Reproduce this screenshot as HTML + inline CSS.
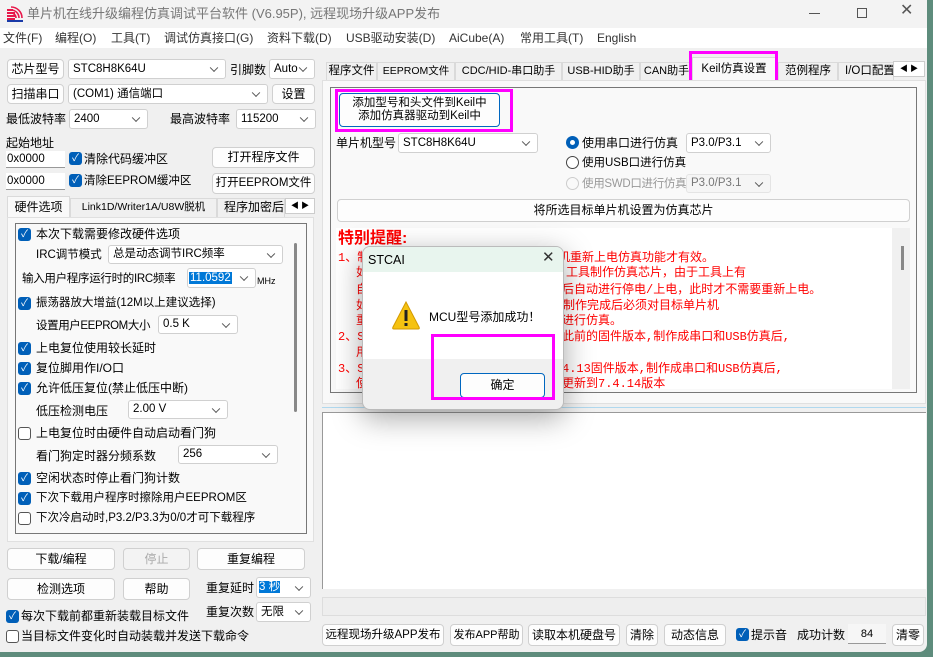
<!DOCTYPE html><html><head><meta charset="utf-8"><style>
*{margin:0;padding:0;box-sizing:border-box}
body{width:933px;height:657px;overflow:hidden;background:#5e8c7c;font-family:"Liberation Sans","Noto Sans CJK SC",sans-serif;font-size:12px;line-height:16px;color:#000;position:relative}
.a{position:absolute;white-space:nowrap}
.win{position:absolute;left:0;top:0;width:927px;height:652px;background:#f0f0f0;border-radius:0 0 8px 0;overflow:hidden}
.btn{position:absolute;background:#fdfdfd;border:1px solid #d0d0d0;border-radius:4px;text-align:center;font-size:12px;white-space:nowrap}
.cb{position:absolute;background:#fff;border:1px solid #d0d0d0;border-radius:3px;padding-left:4px;font-size:11.5px;white-space:nowrap;overflow:hidden}
.cb:after{content:"";position:absolute;right:8px;top:50%;width:5px;height:5px;border-right:1px solid #555;border-bottom:1px solid #555;transform:translateY(-70%) rotate(45deg)}
.ck{position:absolute;width:13px;height:13px;border-radius:3px;background:#005fb8;color:#fff;font-size:10px;line-height:13px;text-align:center}
.uk{position:absolute;width:13px;height:13px;border-radius:3px;border:1px solid #555;background:#fff}
.red{position:absolute;color:#f00;font-size:12px;white-space:nowrap;font-family:"Liberation Mono","Noto Sans CJK SC",monospace}
.tab{position:absolute;top:62px;height:19px;border:1px solid #dadada;border-bottom:none;background:#f0f0f0;font-size:11.5px;text-align:center;line-height:17px;white-space:nowrap;overflow:hidden}
.m{position:absolute;top:30px;font-size:12px;color:#333;line-height:16px;white-space:nowrap}
</style></head><body>
<div class="win">
<div class="a" style="left:0;top:0;width:927px;height:28px;background:#f3f3f3"></div>
<svg class="a" style="left:6px;top:6px" width="18" height="16"><path d="M1 4h6M1 7h8M1 10h8M1 13h8" stroke="#e8174a" stroke-width="2"/><path d="M5 1a11 11 0 0 1 11 11M5 4a8 8 0 0 1 8 8M5 7a5 5 0 0 1 5 5" stroke="#e8174a" stroke-width="1.6" fill="none"/><path d="M1 15h16" stroke="#1a3aa8" stroke-width="2"/></svg>
<div class="a" style="left:27px;top:6px;font-size:13px;color:#777">单片机在线升级编程仿真调试平台软件 (V6.95P), 远程现场升级APP发布</div>
<div class="a" style="left:809px;top:13px;width:11px;height:1px;background:#555"></div>
<div class="a" style="left:857px;top:8px;width:10px;height:10px;border:1px solid #555"></div>
<div class="a" style="left:900px;top:3px;font-size:16px;color:#555">✕</div>
<div class="a" style="left:0;top:28px;width:927px;height:20px;background:#fff"></div>
<div class="m" style="left:3px">文件(F)</div>
<div class="m" style="left:55px">编程(O)</div>
<div class="m" style="left:111px">工具(T)</div>
<div class="m" style="left:164px">调试仿真接口(G)</div>
<div class="m" style="left:267px">资料下载(D)</div>
<div class="m" style="left:346px">USB驱动安装(D)</div>
<div class="m" style="left:449px">AiCube(A)</div>
<div class="m" style="left:520px">常用工具(T)</div>
<div class="m" style="left:597px">English</div>

<div class="btn" style="left:7px;top:59px;width:57px;height:20px;line-height:18px">芯片型号</div>
<div class="cb" style="left:68px;top:59px;width:158px;height:20px;line-height:18px">STC8H8K64U</div>
<div class="a" style="left:230px;top:62px">引脚数</div>
<div class="cb" style="left:269px;top:59px;width:46px;height:20px;line-height:18px">Auto</div>
<div class="btn" style="left:7px;top:84px;width:57px;height:20px;line-height:18px">扫描串口</div>
<div class="cb" style="left:68px;top:84px;width:200px;height:20px;line-height:18px">(COM1) 通信端口</div>
<div class="btn" style="left:272px;top:84px;width:43px;height:20px;line-height:18px">设置</div>
<div class="a" style="left:6px;top:111px">最低波特率</div>
<div class="cb" style="left:69px;top:109px;width:79px;height:20px;line-height:18px">2400</div>
<div class="a" style="left:170px;top:111px">最高波特率</div>
<div class="cb" style="left:236px;top:109px;width:80px;height:20px;line-height:18px">115200</div>
<div class="a" style="left:6px;top:135px">起始地址</div>
<div class="a" style="left:6px;top:151px;width:59px;height:17px;background:#fff;border-bottom:1px solid #999;font-size:11.5px;padding-left:1px">0x0000</div>
<div class="ck" style="left:69px;top:152px">✓</div>
<div class="a" style="left:84px;top:151px">清除代码缓冲区</div>
<div class="btn" style="left:212px;top:147px;width:103px;height:21px;line-height:19px">打开程序文件</div>
<div class="a" style="left:6px;top:173px;width:59px;height:17px;background:#fff;border-bottom:1px solid #999;font-size:11.5px;padding-left:1px">0x0000</div>
<div class="ck" style="left:69px;top:174px">✓</div>
<div class="a" style="left:84px;top:173px;font-size:11.5px">清除EEPROM缓冲区</div>
<div class="btn" style="left:212px;top:173px;width:103px;height:21px;line-height:19px;font-size:11.5px">打开EEPROM文件</div>
<div class="a" style="left:7px;top:196px;width:63px;height:22px;background:#f9f9f9;border:1px solid #dadada;border-bottom:none;text-align:center;line-height:20px">硬件选项</div>
<div class="a" style="left:70px;top:198px;width:147px;height:19px;border:1px solid #dadada;border-bottom:none;text-align:center;line-height:17px;font-size:10.5px">Link1D/Writer1A/U8W脱机</div>
<div class="a" style="left:217px;top:198px;width:68px;height:19px;border:1px solid #dadada;border-bottom:none;overflow:hidden;line-height:17px;padding-left:6px">程序加密后</div>
<div class="a" style="left:285px;top:198px;width:30px;height:16px;background:#fff;border:1px solid #ccc;font-size:8px;line-height:14px;text-align:center">◀ ▶</div>
<div class="a" style="left:7px;top:217px;width:307px;height:325px;background:#f9f9f9;border:1px solid #e0e0e0"></div>
<div class="a" style="left:15px;top:223px;width:292px;height:311px;border:1px solid #777"></div>
<div class="a" style="left:294px;top:243px;width:3px;height:169px;background:#888;border-radius:2px"></div>
<div class="ck" style="left:18px;top:228px">✓</div><div class="a" style="left:36px;top:226px">本次下载需要修改硬件选项</div>
<div class="a" style="left:36px;top:247px;font-size:11.5px">IRC调节模式</div>
<div class="cb" style="left:108px;top:245px;width:175px;height:19px;line-height:17px">总是动态调节IRC频率</div>
<div class="a" style="left:22px;top:271px;font-size:11.5px;letter-spacing:-0.3px">输入用户程序运行时的IRC频率</div>
<div class="cb" style="left:187px;top:268px;width:69px;height:20px;line-height:18px;padding-left:1px"><span style="background:#0078d7;color:#fff;padding:0 1px">11.0592</span></div>
<div class="a" style="left:257px;top:273px;font-size:9px">MHz</div>
<div class="ck" style="left:18px;top:297px">✓</div><div class="a" style="left:36px;top:295px;font-size:11.5px">振荡器放大增益(12M以上建议选择)</div>
<div class="a" style="left:36px;top:318px;font-size:11.5px;letter-spacing:-0.4px">设置用户EEPROM大小</div>
<div class="cb" style="left:158px;top:315px;width:80px;height:19px;line-height:17px">0.5 K</div>
<div class="ck" style="left:18px;top:342px">✓</div><div class="a" style="left:36px;top:340px">上电复位使用较长延时</div>
<div class="ck" style="left:18px;top:362px">✓</div><div class="a" style="left:36px;top:360px">复位脚用作I/O口</div>
<div class="ck" style="left:18px;top:382px">✓</div><div class="a" style="left:36px;top:380px">允许低压复位(禁止低压中断)</div>
<div class="a" style="left:36px;top:403px">低压检测电压</div>
<div class="cb" style="left:128px;top:400px;width:100px;height:19px;line-height:17px">2.00 V</div>
<div class="uk" style="left:18px;top:427px"></div><div class="a" style="left:36px;top:425px">上电复位时由硬件自动启动看门狗</div>
<div class="a" style="left:36px;top:448px">看门狗定时器分频系数</div>
<div class="cb" style="left:178px;top:445px;width:100px;height:19px;line-height:17px">256</div>
<div class="ck" style="left:18px;top:472px">✓</div><div class="a" style="left:36px;top:470px">空闲状态时停止看门狗计数</div>
<div class="ck" style="left:18px;top:492px">✓</div><div class="a" style="left:36px;top:490px;font-size:11.5px">下次下载用户程序时擦除用户EEPROM区</div>
<div class="uk" style="left:18px;top:512px"></div><div class="a" style="left:36px;top:510px;font-size:11.5px">下次冷启动时,P3.2/P3.3为0/0才可下载程序</div>
<div class="btn" style="left:7px;top:548px;width:108px;height:22px;line-height:20px">下载/编程</div>
<div class="btn" style="left:123px;top:548px;width:67px;height:22px;line-height:20px;color:#aaa;background:#f3f3f3">停止</div>
<div class="btn" style="left:197px;top:548px;width:108px;height:22px;line-height:20px">重复编程</div>
<div class="btn" style="left:7px;top:578px;width:108px;height:22px;line-height:20px">检测选项</div>
<div class="btn" style="left:123px;top:578px;width:67px;height:22px;line-height:20px">帮助</div>
<div class="a" style="left:206px;top:580px">重复延时</div>
<div class="cb" style="left:256px;top:577px;width:55px;height:21px;line-height:19px;padding-left:2px"><span style="background:#0078d7;color:#fff">3 秒</span></div>
<div class="ck" style="left:6px;top:610px">✓</div><div class="a" style="left:21px;top:608px">每次下载前都重新装载目标文件</div>
<div class="a" style="left:206px;top:604px">重复次数</div>
<div class="cb" style="left:256px;top:602px;width:55px;height:20px;line-height:18px">无限</div>
<div class="uk" style="left:6px;top:630px"></div><div class="a" style="left:21px;top:628px">当目标文件变化时自动装载并发送下载命令</div>

<div class="tab" style="left:326px;width:51px">程序文件</div>
<div class="tab" style="left:377px;width:78px;font-size:10.5px">EEPROM文件</div>
<div class="tab" style="left:455px;width:107px;font-size:11px">CDC/HID-串口助手</div>
<div class="tab" style="left:562px;width:78px;font-size:11px">USB-HID助手</div>
<div class="tab" style="left:640px;width:53px;font-size:11px">CAN助手</div>
<div class="a" style="left:692px;top:57px;width:84px;height:24px;background:#f9f9f9;border:1px solid #dadada;border-bottom:none;text-align:center;line-height:22px;font-size:11.5px">Keil仿真设置</div>
<div class="a" style="left:689px;top:51px;width:89px;height:33px;border:3px solid #f0f;"></div>
<div class="tab" style="left:778px;width:60px">范例程序</div>
<div class="tab" style="left:838px;width:56px;text-align:left;padding-left:6px">I/O口配置</div>
<div class="a" style="left:893px;top:61px;width:32px;height:16px;background:#fff;border:1px solid #ccc;font-size:8px;line-height:14px;text-align:center">◀ ▶</div>
<div class="a" style="left:322px;top:80px;width:604px;height:324px;background:#f9f9f9;border:1px solid #e0e0e0"></div>
<div class="a" style="left:330px;top:87px;width:587px;height:306px;border:1px solid #777"></div>
<div class="btn" style="left:339px;top:93px;width:161px;height:34px;border-color:#0067c0;line-height:13px;padding-top:3px;font-size:11.5px;background:#fdfdfd">添加型号和头文件到Keil中<br>添加仿真器驱动到Keil中</div>
<div class="a" style="left:335px;top:89px;width:178px;height:43px;border:3px solid #f0f"></div>
<div class="a" style="left:336px;top:135px">单片机型号</div>
<div class="cb" style="left:398px;top:133px;width:140px;height:20px;line-height:18px">STC8H8K64U</div>
<div class="a" style="left:566px;top:136px;width:13px;height:13px;border-radius:50%;background:#005fb8"><div class="a" style="left:4px;top:4px;width:5px;height:5px;border-radius:50%;background:#fff"></div></div>
<div class="a" style="left:582px;top:135px">使用串口进行仿真</div>
<div class="cb" style="left:686px;top:133px;width:85px;height:20px;line-height:18px">P3.0/P3.1</div>
<div class="a" style="left:566px;top:156px;width:13px;height:13px;border-radius:50%;border:1px solid #444;background:#fff"></div>
<div class="a" style="left:582px;top:155px;font-size:11.5px">使用USB口进行仿真</div>
<div class="a" style="left:566px;top:177px;width:13px;height:13px;border-radius:50%;border:1px solid #ccc"></div>
<div class="a" style="left:582px;top:176px;font-size:11.5px;color:#999;letter-spacing:-0.3px">使用SWD口进行仿真</div>
<div class="cb" style="left:686px;top:174px;width:85px;height:19px;line-height:17px;background:#f5f5f5;color:#777;border-color:#e4e4e4">P3.0/P3.1</div>
<div class="btn" style="left:337px;top:199px;width:573px;height:23px;line-height:21px">将所选目标单片机设置为仿真芯片</div>
<div class="a" style="left:336px;top:228px;width:574px;height:161px;background:#fff"></div>
<div class="a" style="left:892px;top:228px;width:18px;height:161px;background:#f0f0f0"></div>
<div class="a" style="left:901px;top:246px;width:3px;height:24px;background:#888"></div>
<div class="a" style="left:338px;top:230px;color:#f00;font-size:16px;line-height:18px;font-weight:bold">特别提醒:</div>
<div class="red" style="left:338px;top:250px">1、制</div><div class="red" style="left:558px;top:250px">机重新上电仿真功能才有效。</div>
<div class="red" style="left:356px;top:265px">如</div><div class="red" style="left:566px;top:265px">工具制作仿真芯片，由于工具上有</div>
<div class="red" style="left:356px;top:282px">自</div><div class="red" style="left:562px;top:282px">后自动进行停电/上电，此时才不需要重新上电。</div>
<div class="red" style="left:356px;top:298px">如</div><div class="red" style="left:563px;top:298px">制作完成后必须对目标单片机</div>
<div class="red" style="left:356px;top:313px">重</div><div class="red" style="left:562px;top:313px">进行仿真。</div>
<div class="red" style="left:338px;top:329px">2、ST</div><div class="red" style="left:562px;top:329px">此前的固件版本,制作成串口和USB仿真后,</div>
<div class="red" style="left:356px;top:345px">用</div>
<div class="red" style="left:338px;top:361px">3、ST</div><div class="red" style="left:562px;top:361px">4.13固件版本,制作成串口和USB仿真后,</div>
<div class="red" style="left:356px;top:376px">使</div><div class="red" style="left:562px;top:376px">更新到7.4.14版本</div>
<div class="a" style="left:322px;top:407px;width:604px;height:1px;background:#b0d8ee"></div>
<div class="a" style="left:322px;top:412px;width:604px;height:177px;background:#fff;border-top:1px solid #999;border-left:1px solid #999"></div>
<div class="a" style="left:322px;top:597px;width:604px;height:19px;background:#eee;border:1px solid #ddd"></div>
<div class="btn" style="left:322px;top:624px;width:122px;height:22px;line-height:20px;font-size:11.5px">远程现场升级APP发布</div>
<div class="btn" style="left:450px;top:624px;width:73px;height:22px;line-height:20px;font-size:11px">发布APP帮助</div>
<div class="btn" style="left:528px;top:624px;width:92px;height:22px;line-height:20px">读取本机硬盘号</div>
<div class="btn" style="left:626px;top:624px;width:32px;height:22px;line-height:20px">清除</div>
<div class="btn" style="left:664px;top:624px;width:62px;height:22px;line-height:20px">动态信息</div>
<div class="ck" style="left:736px;top:628px">✓</div>
<div class="a" style="left:751px;top:627px">提示音</div>
<div class="a" style="left:797px;top:627px">成功计数</div>
<div class="a" style="left:848px;top:624px;width:38px;height:20px;background:#f6f6f6;border-bottom:1px solid #999;text-align:center;line-height:20px;font-size:11px">84</div>
<div class="btn" style="left:892px;top:624px;width:32px;height:22px;line-height:20px">清零</div>
</div>
<div class="a" style="left:362px;top:246px;width:202px;height:164px;background:#f0f0f0;border:1px solid #bbb;border-radius:8px;overflow:hidden;box-shadow:0 8px 30px rgba(0,0,0,.35)">
<div class="a" style="left:0;top:0;width:202px;height:25px;background:#e8f5ee"></div>
<div class="a" style="left:5px;top:5px;font-size:12.5px">STCAI</div>
<div class="a" style="left:179px;top:3px;font-size:15px;color:#333">✕</div>
<div class="a" style="left:0;top:25px;width:202px;height:87px;background:#fff"></div>
<svg class="a" style="left:28px;top:53px" width="30" height="30"><path d="M15 2 L28 27 Q29 29 27 29 L3 29 Q1 29 2 27 Z" fill="#f5c211" stroke="#d49a00"/><rect x="13.5" y="10" width="3" height="11" fill="#222"/><rect x="13.5" y="23" width="3" height="3" fill="#222"/></svg>
<div class="a" style="left:66px;top:62px;font-size:12px">MCU型号添加成功！</div>
<div class="a" style="left:97px;top:126px;width:85px;height:25px;background:#fdfdfd;border:1px solid #0067c0;border-radius:4px;text-align:center;line-height:23px;font-size:12px">确定</div>
<div class="a" style="left:68px;top:87px;width:124px;height:66px;border:3px solid #f0f"></div>
</div>
</body></html>
